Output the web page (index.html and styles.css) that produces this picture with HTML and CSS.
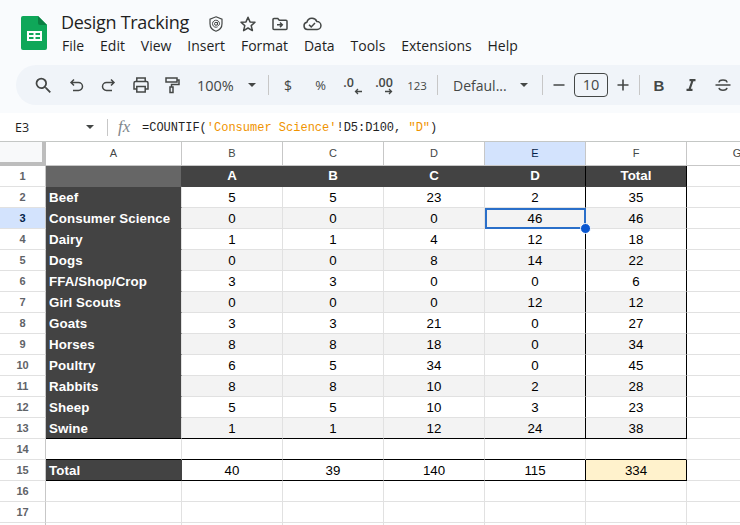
FILE: index.html
```html
<!DOCTYPE html>
<html lang="en">
<head>
<meta charset="utf-8">
<title>Design Tracking</title>
<link rel="stylesheet" href="styles.css">
</head>
<body>
<header class="top">
  <svg class="logo" viewBox="0 0 26 34" width="26" height="34">
    <path d="M2 0H17L26 9V32a2 2 0 0 1-2 2H2a2 2 0 0 1-2-2V2a2 2 0 0 1 2-2z" fill="#0fa759"/>
    <path d="M17 0L26 9H19a2 2 0 0 1-2-2z" fill="#0a8043"/>
    <path d="M6 15H21V25H6zM8 17V19H12.500V17zM14.500 17V19H19V17zM8 21V23H12.500V21zM14.500 21V23H19V21z" fill="#fff" fill-rule="evenodd"/>
  </svg>
  <div class="head-text">
    <div class="title-row">
      <span class="doc-title">Design Tracking</span>
      <svg class="ticon first" viewBox="0 0 18 18"><path d="M9 1.800l6 2.300v4.600c0 3.700-2.500 6.400-6 7.500-3.500-1.100-6-3.800-6-7.500V4.100z" fill="none" stroke="#444746" stroke-width="1.200"/><circle cx="9" cy="8.800" r="1.500" fill="none" stroke="#444746" stroke-width="1"/><path d="M10.500 7.200v2.400c0 1.200 2 1.200 2-.8a3.500 3.500 0 1 0-1.800 3" fill="none" stroke="#444746" stroke-width="1"/></svg>
      <svg class="ticon" viewBox="0 0 18 18"><path d="M9 2.200l2 4.700 5 .4-3.800 3.300 1.200 5L9 13l-4.400 2.600 1.200-5L2 7.300l5-.4z" fill="none" stroke="#444746" stroke-width="1.500" stroke-linejoin="round"/></svg>
      <svg class="ticon" viewBox="0 0 18 18"><path d="M2 4.500a1 1 0 0 1 1-1h3.800l1.500 1.700H15a1 1 0 0 1 1 1v7.300a1 1 0 0 1-1 1H3a1 1 0 0 1-1-1z" fill="none" stroke="#444746" stroke-width="1.500"/><path d="M6 9.800h4.500M9 7.500l2.300 2.300L9 12.100" fill="none" stroke="#444746" stroke-width="1.500"/></svg>
      <svg class="ticon cloud" viewBox="0 0 20 18"><path d="M5.500 14.500a3.700 3.700 0 0 1-.6-7.300 5.300 5.300 0 0 1 10-.6 3.900 3.900 0 0 1 .2 7.900z" fill="none" stroke="#444746" stroke-width="1.500"/><path d="M7 9.800l2.200 2.100 3.800-3.900" fill="none" stroke="#444746" stroke-width="1.500"/></svg>
    </div>
    <nav class="menu">
      <span>File</span><span>Edit</span><span>View</span><span>Insert</span><span>Format</span><span>Data</span><span>Tools</span><span>Extensions</span><span>Help</span>
    </nav>
  </div>
</header>

<div class="toolbar">
  <span class="btn search"><svg viewBox="0 0 24 24"><path d="M15.500 14h-.79l-.28-.27A6.470 6.470 0 0 0 16 9.500 6.500 6.500 0 1 0 9.500 16c1.610 0 3.090-.59 4.230-1.570l.27.28v.79l5 4.990L20.490 19l-4.990-5zm-6 0C7.010 14 5 11.990 5 9.500S7.010 5 9.500 5 14 7.010 14 9.500 11.990 14 9.500 14z" fill="#444746"/></svg></span>
  <span class="btn undo"><svg viewBox="0 0 18 18"><path d="M6 3.500L3 6.500l3 3M3.500 6.500h7a3.500 3.500 0 0 1 0 8H5" fill="none" stroke="#444746" stroke-width="1.500"/></svg></span>
  <span class="btn redo"><svg viewBox="0 0 18 18"><path d="M12 3.500l3 3-3 3M14.500 6.500h-7a3.500 3.500 0 0 0 0 8H13" fill="none" stroke="#444746" stroke-width="1.500"/></svg></span>
  <span class="btn print"><svg viewBox="0 0 18 18"><path d="M4.800 5.500V2h8.400v3.500M4.800 13H2V7a1.500 1.500 0 0 1 1.500-1.500h11A1.500 1.500 0 0 1 16 7v6h-2.800M4.800 10.500h8.400V16H4.800z" fill="none" stroke="#444746" stroke-width="1.500"/></svg></span>
  <span class="btn paint"><svg viewBox="0 0 18 18"><path d="M3 2h11v4H3zM14 4h2v4.500H8.500V11M7 11h3v5.500H7z" fill="none" stroke="#444746" stroke-width="1.500"/></svg></span>
  <span class="tool-text zoom">100%</span><span class="caret zoom-caret"></span>
  <span class="sep sep-a"></span>
  <span class="btn dollar">$</span>
  <span class="btn pct">%</span>
  <span class="btn dec">.0<svg class="arrow" viewBox="0 0 9 7"><path d="M8 3.500H2M4 1L1.500 3.500 4 6" fill="none" stroke="#444746" stroke-width="1.300"/></svg></span>
  <span class="btn inc">.00<svg class="arrow" viewBox="0 0 9 7"><path d="M1 3.500h6M5 1l2.500 2.500L5 6" fill="none" stroke="#444746" stroke-width="1.300"/></svg></span>
  <span class="btn num">123</span>
  <span class="sep sep-b"></span>
  <span class="tool-text font">Defaul...</span><span class="caret font-caret"></span>
  <span class="sep sep-c"></span>
  <span class="btn minus"><svg viewBox="0 0 18 18"><path d="M3.500 9h11" stroke="#444746" stroke-width="1.600"/></svg></span>
  <span class="size">10</span>
  <span class="btn plus"><svg viewBox="0 0 18 18"><path d="M3.500 9h11M9 3.500v11" stroke="#444746" stroke-width="1.600"/></svg></span>
  <span class="sep sep-d"></span>
  <span class="btn bold">B</span>
  <span class="btn ital"><svg viewBox="0 0 24 24"><path d="M10 4v3h2.210l-3.420 10H6v3h8v-3h-2.210l3.420-10H18V4z" fill="#444746"/></svg></span>
  <span class="btn strike"><svg viewBox="0 0 18 18"><path d="M1.500 9h15M5 6.500C5 3 13 3 13 6.500M5 11.800C5.500 15 12.500 15 13 11.800" fill="none" stroke="#444746" stroke-width="1.500"/></svg></span>
</div>

<div class="formula">
  <span class="cell-ref">E3</span>
  <span class="caret ref-caret"></span>
  <span class="sep fsep"></span>
  <span class="fx">fx</span>
  <span class="ftext">=COUNTIF(<span class="fstr">'Consumer Science'</span>!D5:D100, <span class="fstr">"D"</span>)</span>
</div>

<main class="sheet" id="sheet"></main>
<script src="sheet.js"></script>
</body>
</html>
```
FILE: styles.css
```css
* { box-sizing: border-box; }
html, body { margin: 0; padding: 0; height: 525px; overflow: hidden; }
body { background: #f9fbfd; font-family: "Open Sans", "Liberation Sans", sans-serif; color: #1f1f1f; display: flex; flex-direction: column; }

.top { height: 65px; display: flex; padding: 16px 0 0 21px; flex: none; }
.logo { flex: none; }
.head-text { margin-left: 14px; margin-top: -7px; }
.title-row { display: flex; align-items: center; height: 26px; }
.doc-title { font-size: 18px; line-height: 26px; color: #1f1f1f; letter-spacing: -.3px; width: 127px; white-space: nowrap; }
.ticon { width: 18px; height: 18px; margin-left: 14px; margin-top: 4px; flex: none; }
.ticon.first { margin-left: 19px; }
.ticon.cloud { width: 20px; margin-left: 13px; }
.menu { display: flex; gap: 15.900px; font-size: 14px; line-height: 20px; margin-top: 1px; margin-left: 1px; color: #1f1f1f; }
.menu span { white-space: nowrap; }

.toolbar { flex: none; height: 40px; margin-left: 16px; background: #f0f4f9; border-radius: 20px 0 0 20px; display: flex; align-items: center; padding-left: 11px; color: #444746; overflow: hidden; }
.btn { flex: none; width: 32px; height: 24px; display: flex; align-items: center; justify-content: center; font-size: 13px; position: relative; }
.btn svg { width: 18px; height: 18px; }
.btn.search svg { width: 21px; height: 21px; }
.btn.undo { margin-left: 2px; }
.btn.redo { margin-left: -1px; }
.btn.print { margin-left: 1px; }
.btn.paint { margin-left: -1px; }
.tool-text { font-size: 14.500px; white-space: nowrap; flex: none; }
.zoom { margin-left: 9px; width: 39px; }
.caret { width: 0; height: 0; border-left: 4.500px solid transparent; border-right: 4.500px solid transparent; border-top: 4.500px solid #444746; flex: none; }
.zoom-caret { margin-left: 12px; }
.sep { width: 1px; height: 20px; background: #c7c7c7; flex: none; }
.sep-a { margin-left: 12px; }
.dollar { margin-left: 3px; font-size: 14px; }
.pct { font-size: 13px; padding-left: 1px; }
.dec, .inc { font-size: 12.500px; font-weight: 600; align-items: flex-start; line-height: 16px; padding-top: 2px; }
.dec { padding-right: 7px; }
.arrow { position: absolute; width: 9px !important; height: 7px !important; left: 18px; bottom: 2px; }
.inc .arrow { left: 16px; }
.num { font-size: 11.500px; margin-left: 1px; }
.sep-b { margin-left: 4px; }
.font { margin-left: 15px; width: 54px; font-size: 14px; }
.font-caret { margin-left: 12.500px; }
.sep-c { margin-left: 14.500px; }
.size { flex: none; width: 34px; height: 24px; border: 1px solid #444746; border-radius: 4px; font-size: 14.500px; text-align: center; line-height: 22px; margin-left: -1px; }
.plus { margin-left: -1px; }
.bold { font-family: "Liberation Sans", sans-serif; font-weight: 700; font-size: 15px; margin-left: 3px; }

.formula { flex: none; height: 29px; margin-top: 8px; background: #fff; border-bottom: 1px solid #c4c7c5; display: flex; align-items: center; }
.cell-ref { font-size: 12.500px; width: 86px; padding-left: 15px; color: #1f1f1f; }
.ref-caret { border-left-width: 4px; border-right-width: 4px; border-top-width: 4px; }
.fsep { margin-left: 13px; height: 17px; }
.fx { font-family: "Liberation Serif", serif; font-style: italic; font-size: 17px; color: #80868b; margin-left: 10px; width: 24px; }
.ftext { font-family: "Liberation Mono", monospace; font-size: 12px; color: #1f1f1f; white-space: pre; padding-top: 1px; }
.fstr { color: #f09300; }

.sheet { flex: none; background: #fff; height: 383px; display: grid; grid-template-columns: 46px 136px repeat(6, 101px); grid-template-rows: 24px repeat(18, 21px); font-family: "Liberation Sans", sans-serif; position: relative; overflow: hidden; }
.c { border-right: 1px solid #e1e1e1; border-bottom: 1px solid #e1e1e1; font-size: 13.300px; color: #000; text-align: center; line-height: 21px; white-space: nowrap; overflow: hidden; position: relative; }
.corner { background: #f8f9fa; border-right: 4px solid #bdbdbd; border-bottom: 4px solid #bdbdbd; }
.ch { background: #fff; color: #444746; font-size: 11px; line-height: 22px; border-right: 1px solid #c7c7c7; border-bottom: 1px solid #c7c7c7; }
.ch.on { background: #d3e3fd; color: #041e49; }
.rh { background: #fff; font-size: 11px; font-weight: 700; color: #5f6368; line-height: 20px; border-right: 1px solid #c7c7c7; border-bottom: 1px solid #e1e1e1; }
.rh.on { background: #d3e3fd; color: #041e49; }
.lab { background: #434343; color: #fff; font-weight: 700; text-align: left; padding-left: 3px; border-color: #434343; border-right-color: #e1e1e1; letter-spacing: .1px; }
.lab.blank { background: #666; border-color: #666; border-right-color: #434343; }
.lab.tot { border-right-color: #434343; }
.hd { background: #434343; color: #fff; font-weight: 700; font-size: 13.300px; line-height: 20px; border-color: #434343; }
.alt { background: #f3f3f3; }
.vb { border-right-color: #000; }
.bb { border-bottom-color: #000; }
.warn { background: #fff2cc; }
.sel { outline: 2px solid #2a6fc9; outline-offset: -2px; }
.sel-wrap { position: relative; overflow: visible; z-index: 2; }
.handle { position: absolute; right: -6px; bottom: -6px; width: 11px; height: 11px; background: #0b57d0; border: 1px solid #fff; border-radius: 50%; }
```
FILE: sheet.js
```js
var sheet = document.getElementById('sheet');
var rows = [
  ['Beef',5,5,23,2,35],
  ['Consumer Science',0,0,0,46,46],
  ['Dairy',1,1,4,12,18],
  ['Dogs',0,0,8,14,22],
  ['FFA/Shop/Crop',3,3,0,0,6],
  ['Girl Scouts',0,0,0,12,12],
  ['Goats',3,3,21,0,27],
  ['Horses',8,8,18,0,34],
  ['Poultry',6,5,34,0,45],
  ['Rabbits',8,8,10,2,28],
  ['Sheep',5,5,10,3,23],
  ['Swine',1,1,12,24,38]
];
function add(cls, text) {
  var d = document.createElement('div');
  d.className = 'c ' + cls;
  if (text !== undefined) d.textContent = text;
  sheet.appendChild(d);
  return d;
}
add('corner');
['A','B','C','D','E','F','G'].forEach(function (l) { add('ch' + (l === 'E' ? ' on' : ''), l); });
add('rh', 1);
add('lab blank');
['A','B','C','D'].forEach(function (l) { add('hd' + (l === 'D' ? ' vb' : ''), l); });
add('hd vb', 'Total');
add('');
rows.forEach(function (r, i) {
  var n = i + 2;
  var alt = n % 2 === 1 ? ' alt' : '';
  var bot = n === 13 ? ' bb' : '';
  add('rh' + (n === 3 ? ' on' : ''), n);
  add('lab' + bot, r[0]);
  for (var k = 1; k <= 5; k++) {
    var cls = alt + bot + (k >= 4 ? ' vb' : '');
    var d = add(cls, r[k]);
    if (n === 3 && k === 4) {
      d.className += ' sel sel-wrap';
      var h = document.createElement('span');
      h.className = 'handle';
      d.appendChild(h);
    }
  }
  add('');
});
add('rh', 14); add(' bb'); for (var a = 0; a < 5; a++) add(' bb'); add('');
add('rh', 15);
add('lab tot bb', 'Total');
[40,39,140,115].forEach(function (v, i) { add(' bb' + (i === 3 ? ' vb' : ''), v); });
add('warn bb vb', 334);
add('');
add('rh', 16); for (var c1 = 0; c1 < 7; c1++) add('');
add('rh', 17); for (var c2 = 0; c2 < 7; c2++) add('');
add('rh'); for (var c3 = 0; c3 < 7; c3++) add('');
```
